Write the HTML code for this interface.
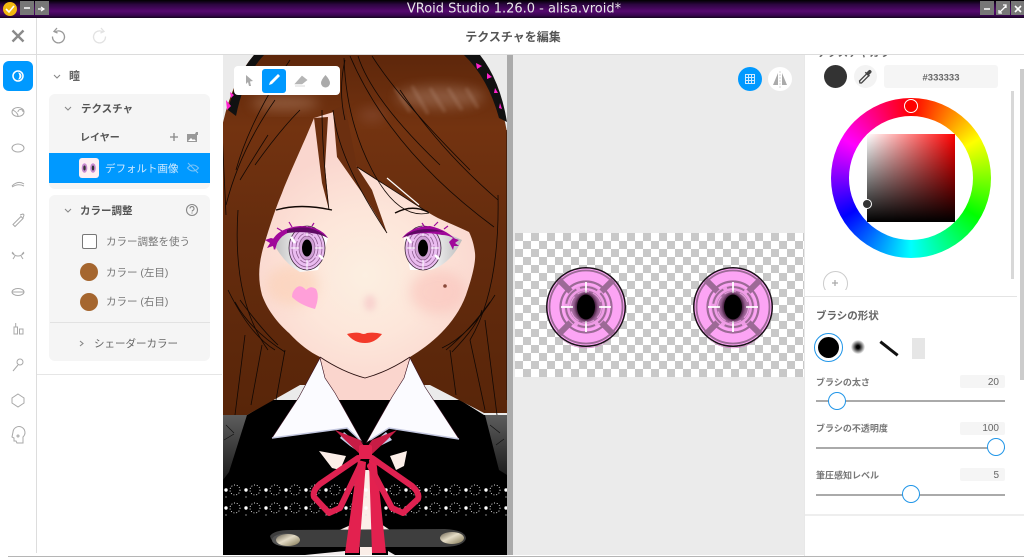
<!DOCTYPE html>
<html lang="ja"><head><meta charset="utf-8"><title>VRoid Studio</title>
<style>
*{box-sizing:border-box}
html,body{margin:0;padding:0;background:#fff}
#r{position:relative;width:1024px;height:558px;overflow:hidden;background:#fff;font-family:"Liberation Sans","Noto Sans CJK JP",sans-serif;color:#666;filter:blur(.3px)}
.a{position:absolute}
.t{position:absolute;white-space:nowrap;transform:translateY(calc(-50% + 1px));line-height:1;font-size:10px}
.b{font-weight:700}
svg{position:absolute;left:0;top:0;overflow:visible}
.wb{position:absolute;top:1px;width:14px;height:14px;background:#777}
</style></head><body><div id="r">
<div class="a" style="left:0;top:0;width:1024px;height:18px;background:linear-gradient(#000 0,#2c0640 25%,#55086f 62%,#3a0650 85%,#14021e 100%)"></div>
<div class="t" style="left:2px;width:1024px;text-align:center;top:8px;font-size:13px;font-family:'DejaVu Sans',sans-serif;color:#e8e8e8">VRoid Studio 1.26.0 - alisa.vroid*</div>
<div class="wb" style="left:20px"></div><div class="wb" style="left:35px"></div>
<div class="wb" style="left:980px"></div><div class="wb" style="left:996px"></div><div class="wb" style="left:1011px"></div>

<div class="a" style="left:223px;top:55px;width:284px;height:500px;background:#ebebeb"></div>
<div class="a" style="left:507px;top:55px;width:6px;height:500px;background:#aaa"></div>
<div class="a" style="left:513px;top:55px;width:291px;height:500px;background:#ebebeb"></div>

<svg width="1024" height="558" viewBox="0 0 1024 558">
<defs>
<pattern id="ck" width="16" height="16" patternUnits="userSpaceOnUse" x="515" y="233"><rect width="16" height="16" fill="#fff"/><rect width="8" height="8" fill="#c8c8c8"/><rect x="8" y="8" width="8" height="8" fill="#c8c8c8"/></pattern>
<pattern id="lace" width="20" height="18" patternUnits="userSpaceOnUse" x="222" y="482"><circle cx="4" cy="8" r="1.700" fill="#fff"/><circle cx="13" cy="8" r="5" fill="none" stroke="#eee" stroke-width=".9" stroke-dasharray="1 1.800"/><circle cx="4" cy="15" r=".6" fill="#ddd"/></pattern>
<linearGradient id="hg" x1="0" y1="55" x2="0" y2="415" gradientUnits="userSpaceOnUse"><stop offset="0" stop-color="#5e270b"/><stop offset=".2" stop-color="#733310"/><stop offset=".5" stop-color="#652c0e"/><stop offset="1" stop-color="#582509"/></linearGradient>
<radialGradient id="sk" cx="365" cy="275" r="125" gradientUnits="userSpaceOnUse"><stop offset="0" stop-color="#fcefe1"/><stop offset=".5" stop-color="#fde6da"/><stop offset="1" stop-color="#fad6ce"/></radialGradient>
<linearGradient id="slv" x1="0" y1="0" x2="0" y2="1"><stop offset="0" stop-color="#5c5c5c"/><stop offset="1" stop-color="#1c1c1c"/></linearGradient>
<linearGradient id="wl" x1="0" y1="0" x2="1" y2="0"><stop offset="0" stop-color="#bbb"/><stop offset=".6" stop-color="#fff"/></linearGradient>
<linearGradient id="wr" x1="1" y1="0" x2="0" y2="0"><stop offset="0" stop-color="#bbb"/><stop offset=".6" stop-color="#fff"/></linearGradient>
<linearGradient id="btn" x1="0" y1="0" x2="1" y2="1"><stop offset="0" stop-color="#6b6250"/><stop offset=".45" stop-color="#e4dcc6"/><stop offset="1" stop-color="#7f7550"/></linearGradient>
<filter id="bl6" x="-50%" y="-50%" width="200%" height="200%"><feGaussianBlur stdDeviation="6"/></filter>
<filter id="bl3" x="-50%" y="-50%" width="200%" height="200%"><feGaussianBlur stdDeviation="3"/></filter>
<filter id="bl1" x="-50%" y="-50%" width="200%" height="200%"><feGaussianBlur stdDeviation="1.500"/></filter>
<clipPath id="vp"><rect x="223" y="55" width="284" height="500"/></clipPath>
<clipPath id="hairc"><path d="M254 55H466Q500 85 507 133V415H222V127Q232 80 254 55Z"/></clipPath>
<clipPath id="fc"><path d="M314 118C303 145 290 172 282 193C274 212 268 232 264 245C258 265 258 280 262 295C268 312 280 325 289 333C300 345 310 352 320 357C335 367 350 374 365 378C380 374 395 367 410 357C430 345 455 325 466 295C472 278 476 262 475 253C474 245 472 238 469 232C455 225 440 220 429 213C410 200 385 185 357 167L340 110Z"/></clipPath>
<g id="eyet">
<circle r="40" fill="#1a1018"/>
<circle r="38.500" fill="#fca4f4"/>
<path d="M-27 30A38 38 0 0 0 27 30A40 40 0 0 1 -27 30Z" fill="#d77cc8"/>
<circle r="36.500" fill="none" stroke="#9c6a96" stroke-width="1.800"/>
<path d="M-27-27L-15-15M27-27L15-15M-27 27L-15 15M27 27L15 15" stroke="#9c6a96" stroke-width="6"/>
<circle r="25.500" fill="none" stroke="#9c6a96" stroke-width="2.200"/>
<circle r="22" fill="#ef9ce6"/>
<circle r="20" fill="none" stroke="#9c6a96" stroke-width="2" stroke-dasharray="18 4"/>
<circle r="16.500" fill="#a86ea2"/>
<circle r="15.500" fill="none" stroke="#e8a0e0" stroke-width="1.200" stroke-dasharray="12 4"/>
<path d="M0-25V-14M0 25V14M-25 0H-13M25 0H13" stroke="#fff" stroke-width="1.800"/>
<ellipse rx="11" ry="14" fill="#3a1436" filter="url(#bl1)"/>
<ellipse rx="9" ry="12.500" fill="#000"/>
</g>
<g id="iris">
<ellipse rx="18" ry="22" fill="#eabcf0" stroke="#3d2a3a" stroke-width=".8"/>
<ellipse rx="15" ry="19" fill="none" stroke="#8e5e90" stroke-width=".8"/>
<ellipse rx="11" ry="15" fill="none" stroke="#8e5e90" stroke-width=".8" stroke-dasharray="8 2"/>
<ellipse rx="8" ry="12" fill="#cf9fd4" stroke="#8e5e90" stroke-width=".8"/>
<path d="M0-22V-12M0 22V12M-16 0H-8M16 0H8" stroke="#fff" stroke-width="1"/>
<path d="M-16-11L-12-5M12 7L16 11" stroke="#fff" stroke-width="2.500"/>
<ellipse rx="5" ry="8.500" fill="#000"/>
</g>
</defs>

<!-- texture -->
<rect x="515" y="233" width="289" height="144" fill="url(#ck)"/>
<use href="#eyet" x="586" y="307"/>
<use href="#eyet" x="733" y="307"/>

<g clip-path="url(#vp)">
<!-- body -->
<path d="M222 415H247L272 400H460L484 415H507V555H222Z" fill="#000"/>
<path d="M223 415H247L229 472L223 480Z" fill="url(#slv)"/>
<path d="M485 415H507V475L499 470Z" fill="url(#slv)"/>
<path d="M226 425l8 8M224 440l10-6M490 425l10 8M496 445l8-6" stroke="#111" stroke-width=".7" fill="none"/>
<!-- hair -->
<path d="M254 55H466Q500 85 507 133V413H484L430 385H300L247 415H222V127Q232 80 254 55Z" fill="url(#hg)"/>
<!-- headband -->
<path d="M228 110Q236 76 254 55H264Q244 76 236 116Z" fill="#111"/>
<path d="M464 55H480Q500 80 507 122L499 118Q488 78 464 55Z" fill="#111"/>
<path d="M226 100l5 6-4 4zM230 92l4 3-3 3zM476 63l6 3-5 3zM487 73l5 4-5 2zM495 88l3 5-4 0zM500 103l2 6-3-1z" fill="#ff22cc"/>
<!-- highlights -->
<g clip-path="url(#hairc)">
<ellipse cx="440" cy="97" rx="44" ry="11" fill="#d9b9a8" opacity=".3" filter="url(#bl6)"/>
<g stroke="#d9b9a8" stroke-width="3" opacity=".22" filter="url(#bl1)"><path d="M395 88L410 112M412 86L428 114M430 88L445 112M448 88L462 110M466 88L478 108"/></g>
<ellipse cx="285" cy="103" rx="34" ry="7" fill="#d0a890" opacity=".36" filter="url(#bl6)"/>
<ellipse cx="372" cy="115" rx="14" ry="7" fill="#c99" opacity=".18" filter="url(#bl6)"/>
</g>
<!-- face -->
<g clip-path="url(#fc)">
<rect x="250" y="100" width="235" height="285" fill="url(#sk)"/>
<ellipse cx="292" cy="285" rx="26" ry="20" fill="#fbcfb4" opacity=".6" filter="url(#bl6)"/>
<ellipse cx="438" cy="292" rx="28" ry="22" fill="#f9bfb8" opacity=".55" filter="url(#bl6)"/>
<ellipse cx="370" cy="303" rx="6" ry="8" fill="#f6c4c6" opacity=".6" filter="url(#bl3)"/>
</g>
<path d="M320 357C335 367 350 374 365 378C380 374 395 367 410 357L404 378L392 400H335L325 378Z" fill="#fad5cd"/>
<path d="M320 357C335 367 350 374 365 378C380 374 395 367 410 357" fill="none" stroke="#2a1010" stroke-width=".9"/>
<!-- bangs -->
<path d="M314 118L328 117L325 167L329 210L322 183Z" fill="#6b2f10"/>
<path d="M333 110L337 157L365 197L387 233L372 190L357 167L345 105Z" fill="#6b2f10"/>
<path d="M387 178L419 205" stroke="#fff" stroke-width="1.200"/>
<g fill="none" stroke="#120804" stroke-width=".8">
<path d="M344 58Q346 120 372 170T429 213"/><path d="M350 56Q390 150 494 227"/>
<path d="M358 56Q372 100 440 165"/><path d="M372 56Q400 100 470 170"/><path d="M400 90Q440 150 498 200"/>
<path d="M322 110Q322 150 329 210"/><path d="M333 110Q338 160 387 233"/>
<path d="M275 100Q240 150 226 205"/><path d="M300 110Q280 130 255 165"/>
<path d="M290 60Q250 120 236 170"/><path d="M268 135Q252 160 240 180"/><path d="M345 60Q338 90 345 120"/>
<path d="M357 167L429 213"/><path d="M222 130L226 215"/>
<path d="M238 210Q232 300 268 350"/>
<path d="M498 195Q500 290 470 340"/><path d="M507 130V400"/>
<path d="M245 335L235 415M262 345L251 405M285 350L276 400M450 350L456 395M470 340L485 410M485 320L497 415"/>
<path d="M235 302Q250 330 285 352M240 300Q262 330 278 345M228 290Q250 335 275 350M446 350Q470 330 490 302M452 352Q478 325 482 310M442 348Q470 335 495 295"/>
<path d="M276 210Q300 203 332 210" stroke-width="1.400"/>
<path d="M395 213Q412 204 428 212" stroke-width="1.400"/>
</g>
<!-- eyes -->
<path d="M272 240Q300 222 328 238L318 270L300 272Q282 262 272 240Z" fill="url(#wl)"/>
<path d="M404 238Q430 224 462 240Q450 265 430 270L410 270Z" fill="url(#wr)"/>
<use href="#iris" x="307" y="248"/>
<use href="#iris" x="423" y="248"/>
<path d="M272 241Q278 228 300 226Q320 226 328 238Q312 228 296 231Q280 232 274 250Z" fill="#a0089a"/>
<path d="M287 230Q310 222 328 238Q312 230 287 233Z" fill="#5e0a62"/>
<path d="M271 238l-6 2 5 3-3 5 6-2 2 4 3-10z" fill="#a0089a"/>
<path d="M292 227l-3-5M282 231l-5-3M312 226l2-3" stroke="#a0089a" stroke-width="1.200"/>
<path d="M402 238Q412 226 430 226Q448 230 459 243Q452 235 442 235Q420 230 402 238Z" fill="#a0089a"/>
<path d="M403 237Q420 224 445 232Q425 230 403 237Z" fill="#5e0a62"/>
<path d="M453 238l6 2-4 3 4 3-5 0-1 4-4-8z" fill="#a0089a"/>
<path d="M434 226l4-4M444 229l4-3M424 226l-2-3" stroke="#a0089a" stroke-width="1.200"/>
<!-- facial -->
<path d="M295 289Q300 283 306 290Q311 285 316 289Q320 296 315 309Q300 305 292 297Q292 292 295 289Z" fill="#ff9fd9"/>
<circle cx="445" cy="286" r="1.800" fill="#8a4a3a"/>
<path d="M347 334Q355 332 360 333Q364 335 367 333Q375 332 382 334Q375 343 365 343Q354 343 347 334Z" fill="#f33a2a"/>
<!-- collar -->
<path d="M344 432L365 450L386 432L392 440L380 446L365 456L350 446L340 438Z" fill="#c4cde8"/>
<path d="M319 451L346 456L340 470L332 468Z" fill="#fbeee8"/>
<path d="M407 451L390 456L396 470L404 466Z" fill="#fbeee8"/>
<path d="M360 470H372V555H360Z" fill="#fbeee8"/>
<path d="M335 532L362 520H375L393 532Z" fill="#fbeee8"/>
<rect x="223" y="482" width="284" height="36" fill="url(#lace)"/>
<path d="M320 358L325 378L335 393L363 443L347 428L272 438L299 397Z" fill="#fbfbff" stroke="#3a1020" stroke-width=".6"/>
<path d="M410 358L404 378L392 397L366 443L389 428L459 439L425 387Z" fill="#fbfbff" stroke="#3a1020" stroke-width=".6"/>
<path d="M272 438L347 428L360 440" fill="none" stroke="#c4c8e0" stroke-width="1.400"/>
<path d="M459 439L389 428L370 440" fill="none" stroke="#c4c8e0" stroke-width="1.400"/>
<!-- belt -->
<path d="M270 536Q274 530 290 530L445 529Q465 530 466 538Q465 546 445 547H290Q272 546 270 536Z" fill="#3e3e3e"/>
<ellipse cx="286" cy="540" rx="14" ry="6.500" fill="#555"/>
<ellipse cx="288" cy="540" rx="12" ry="6" fill="url(#btn)"/>
<ellipse cx="452" cy="538" rx="12" ry="6" fill="url(#btn)"/>
<path d="M305 555L345 551V555ZM388 551L395 555H388Z" fill="#f4eeee"/>
<!-- ribbon -->
<path d="M335 430L360 440L368 452L362 456L345 440ZM397 430L372 440L364 452L370 456L387 440Z" fill="#c71c45"/>
<path d="M358 460L345 553H359L366 462Z" fill="#e3214f"/>
<path d="M369 460L372 553H386L376 458Z" fill="#e3214f"/>
<g fill="none" stroke="#df2150" stroke-width="6" stroke-linejoin="round" stroke-linecap="round">
<path d="M358 458L320 484Q312 491 314 497L329 513L340 508L360 466"/>
<path d="M372 458L412 486Q420 493 418 499L403 513L392 508L370 466"/>
</g>
<rect x="359" y="445" width="13" height="14" rx="2" fill="#e3214f"/>
</g>
</svg>

<!-- left rail & toolbar lines -->
<div class="a" style="left:0;top:18px;width:1024px;height:1px;background:#fff"></div>
<div class="a" style="left:0;top:54px;width:1024px;height:1px;background:#dcdcdc"></div>
<div class="a" style="left:36px;top:18px;width:1px;height:535px;background:#ddd"></div>
<div class="a" style="left:37px;top:374px;width:185px;height:1px;background:#e6e6e6"></div>
<div class="a" style="left:8px;top:556px;width:1016px;height:1px;background:#b5b5b5"></div>
<div class="a" style="left:3px;top:61px;width:30px;height:30px;border-radius:6px;background:#0099ff"></div>

<!-- left panel -->
<div class="t b" style="left:69px;top:76px;font-size:11px;color:#666">瞳</div>
<div class="a" style="left:49px;top:94px;width:161px;height:95px;border-radius:6px;background:#f5f5f5"></div>
<div class="t b" style="left:81px;top:108px;font-size:10.500px;color:#555">テクスチャ</div>
<div class="t b" style="left:80px;top:138px;font-size:10px;color:#555">レイヤー</div>
<div class="a" style="left:49px;top:153px;width:161px;height:30px;background:#0099ff"></div>
<div class="a" style="left:79px;top:158px;width:20px;height:20px;border-radius:3px;background:#fdeef2"></div>
<div class="t" style="left:105px;top:168px;font-size:10.500px;color:#cfe9ff">デフォルト画像</div>
<div class="a" style="left:49px;top:195px;width:161px;height:166px;border-radius:6px;background:#f5f5f5"></div>
<div class="t b" style="left:80px;top:210px;font-size:10.500px;color:#555">カラー調整</div>
<div class="a" style="left:82px;top:234px;width:15px;height:15px;border-radius:2px;border:1px solid #777;background:#fff"></div>
<div class="t" style="left:106px;top:241px;font-size:10.500px;color:#777">カラー調整を使う</div>
<div class="a" style="left:80px;top:263px;width:18px;height:18px;border-radius:50%;background:#a5662f"></div>
<div class="t" style="left:106px;top:272px;font-size:10.500px;color:#777">カラー (左目)</div>
<div class="a" style="left:80px;top:293px;width:18px;height:18px;border-radius:50%;background:#a5662f"></div>
<div class="t" style="left:106px;top:301px;font-size:10.500px;color:#777">カラー (右目)</div>
<div class="a" style="left:50px;top:322px;width:160px;height:1px;background:#e2e2e2"></div>
<div class="t" style="left:94px;top:343px;font-size:10.500px;color:#666">シェーダーカラー</div>

<!-- header -->
<div class="t b" style="left:1px;width:1024px;text-align:center;top:36px;font-size:12px;color:#555">テクスチャを編集</div>

<!-- viewport tool -->
<div class="a" style="left:234px;top:66px;width:106px;height:29px;border-radius:4px;background:#fff"></div>
<div class="a" style="left:262px;top:69px;width:24px;height:24px;border-radius:3px;background:#0099ff"></div>
<div class="a" style="left:738px;top:67px;width:24px;height:24px;border-radius:50%;background:#0099ff"></div>
<div class="a" style="left:768px;top:67px;width:24px;height:24px;border-radius:50%;background:#fff"></div>

<!-- right panel -->
<div class="a" style="left:804px;top:55px;width:220px;height:501px;background:#fff;overflow:hidden">
  <div class="t b" style="left:13px;top:-3px;font-size:10.500px;color:#666">テクスチャカラー</div>
</div>
<div class="a" style="left:824px;top:65px;width:23px;height:23px;border-radius:50%;background:#333"></div>
<div class="a" style="left:854px;top:65px;width:23px;height:23px;border-radius:50%;background:#f3f3f3"></div>
<div class="a" style="left:884px;top:65px;width:114px;height:23px;border-radius:3px;background:#f5f5f5"></div>
<div class="t b" style="left:884px;width:114px;text-align:center;top:77px;font-size:9.500px;color:#666">#333333</div>
<div class="a" style="left:831px;top:98px;width:160px;height:160px;border-radius:50%;background:conic-gradient(#f00,#ff0,#0f0,#0ff,#00f,#f0f,#f00)"></div>
<div class="a" style="left:849px;top:116px;width:124px;height:124px;border-radius:50%;background:#fff"></div>
<div class="a" style="left:867px;top:134px;width:88px;height:88px;background:linear-gradient(to top,#000,rgba(0,0,0,0)),linear-gradient(to right,#fff,#f00)"></div>
<div class="a" style="left:904px;top:99px;width:14px;height:14px;border-radius:50%;border:1.500px solid #fff;background:#f00"></div>
<div class="a" style="left:862px;top:199px;width:10px;height:10px;border-radius:50%;border:1px solid #fff;background:#333"></div>
<div class="a" style="left:823px;top:271px;width:25px;height:19px;overflow:hidden"><div class="a" style="left:0;top:0;width:25px;height:25px;border-radius:50%;border:1px solid #ccc"></div></div>
<div class="a" style="left:804px;top:296px;width:213px;height:1px;background:#e4e4e4"></div>
<div class="a" style="left:1011px;top:91px;width:3px;height:188px;background:#d8d8d8"></div>
<div class="a" style="left:1020px;top:69px;width:4px;height:311px;background:#ccc"></div>
<div class="t b" style="left:816px;top:315px;font-size:10.500px;color:#666">ブラシの形状</div>
<div class="a" style="left:814px;top:333px;width:29px;height:29px;border-radius:50%;border:1.500px solid #2196e8"></div>
<div class="a" style="left:818px;top:337px;width:21px;height:21px;border-radius:50%;background:#000"></div>
<div class="a" style="left:851px;top:340px;width:14px;height:14px;border-radius:50%;background:radial-gradient(#000 15%,rgba(0,0,0,0) 72%)"></div>
<div class="a" style="left:878px;top:347px;width:22px;height:3px;background:#111;transform:rotate(38deg)"></div>
<div class="a" style="left:912px;top:338px;width:13px;height:21px;background:#e6e6e6"></div>

<div class="t b" style="left:816px;top:382px;font-size:9px;color:#777">ブラシの太さ</div>
<div class="a" style="left:960px;top:375px;width:45px;height:13px;border-radius:2px;background:#f5f5f5"></div>
<div class="t" style="right:25px;top:382px;font-size:10px;color:#666">20</div>
<div class="a" style="left:816px;top:400px;width:189px;height:2px;background:#aaa"></div>
<div class="a" style="left:828px;top:392px;width:18px;height:18px;border-radius:50%;border:1.500px solid #2196e8;background:#fff"></div>

<div class="t b" style="left:816px;top:428px;font-size:9px;color:#777">ブラシの不透明度</div>
<div class="a" style="left:960px;top:422px;width:45px;height:13px;border-radius:2px;background:#f5f5f5"></div>
<div class="t" style="right:25px;top:428px;font-size:10px;color:#666">100</div>
<div class="a" style="left:816px;top:447px;width:189px;height:2px;background:#aaa"></div>
<div class="a" style="left:987px;top:438px;width:18px;height:18px;border-radius:50%;border:1.500px solid #2196e8;background:#fff"></div>

<div class="t b" style="left:816px;top:475px;font-size:9px;color:#777">筆圧感知レベル</div>
<div class="a" style="left:960px;top:468px;width:45px;height:13px;border-radius:2px;background:#f5f5f5"></div>
<div class="t" style="right:25px;top:475px;font-size:10px;color:#666">5</div>
<div class="a" style="left:816px;top:494px;width:189px;height:2px;background:#aaa"></div>
<div class="a" style="left:902px;top:485px;width:18px;height:18px;border-radius:50%;border:1.500px solid #2196e8;background:#fff"></div>
<div class="a" style="left:804px;top:514px;width:220px;height:2px;background:#eee"></div>
<div class="a" style="left:804px;top:55px;width:1px;height:501px;background:#e8e8e8"></div>

<!-- icons overlay -->
<svg width="1024" height="558" viewBox="0 0 1024 558">
<circle cx="10" cy="9" r="7" fill="#f2b90f"/><path d="M6 9l3 3 5-6" stroke="#fff" stroke-width="1.600" fill="none"/>
<path d="M24 8h6" stroke="#fff" stroke-width="1.500"/><path d="M38 9h6M41 7l3 2-3 2" stroke="#fff" stroke-width="1.200" fill="none"/>
<path d="M984 9h6" stroke="#fff" stroke-width="1.500"/><path d="M1000 12l6-6M1003 5h3v3M1002 13H999V10" stroke="#fff" stroke-width="1.300" fill="none"/><path d="M1015 6l6 6M1021 6l-6 6" stroke="#fff" stroke-width="1.600"/>
<!-- header icons -->
<path d="M12.500 30.500l11 11M23.500 30.500l-11 11" stroke="#8a8a8a" stroke-width="2.400"/>
<g fill="none" stroke="#999" stroke-width="1.300"><path d="M55 32a6 6 0 1 1-2.500 4.500"/><path d="M57 28l-3 3.500 3.500 1.500"/></g>
<g fill="none" stroke="#e2e2e2" stroke-width="1.300"><path d="M103 32a6 6 0 1 0 2.500 4.500"/><path d="M101 28l3 3.500-3.500 1.500"/></g>
<!-- rail -->
<circle cx="18" cy="76" r="5" fill="none" stroke="#fff" stroke-width="1.500"/><path d="M18 72.500a3.500 3.500 0 0 1 0 7a5 5 0 0 0 0-7Z" fill="#fff"/>
<g fill="none" stroke="#a8a8a8" stroke-width="1">
<ellipse cx="18" cy="112" rx="6" ry="4.500"/><path d="M13 110Q18 113 18 116M18 112a2.500 2.500 0 0 1 5 0"/>
<ellipse cx="18" cy="148" rx="6" ry="4"/>
<path d="M12 186Q18 180 24 184M12 187Q18 183 24 186"/>
<path d="M13 224.500l8-8 2 2-8 8ZM20 215l3-1 1 1-1 3"/>
<path d="M12 253Q18 259 24 253M12 252l2 2M24 252l-2 2M13 259l2-3M23 259l-2-3"/>
<ellipse cx="18" cy="292" rx="6" ry="3.500"/><path d="M12 292H24"/>
<rect x="14" y="327" width="3.500" height="7"/><rect x="19.500" y="329" width="3.500" height="5"/><path d="M15.700 327V323"/>
<circle cx="20" cy="362" r="3"/><path d="M18 365L13 371"/>
<path d="M18 394L24 398V403L18 407L12 403V398Z"/>
<path d="M13 432a6 6 0 1 1 10 5V443H17l-1-2H14V438L12 437Z"/><circle cx="18" cy="436" r="1"/>
</g>
<!-- panel chevrons -->
<g fill="none" stroke="#888" stroke-width="1.100">
<path d="M54 75l3 3 3-3M65 107l3 3 3-3M65 209l3 3 3-3M80 341l3 2.500-3 2.500"/>
<path d="M174 133v8M170 137h8" stroke-width="1.300"/>
<circle cx="192" cy="210" r="5.500"/><path d="M190 208.500a2 2 0 1 1 2.500 2l-.5 1"/>
</g>
<circle cx="192" cy="213" r=".6" fill="#888"/>
<path d="M187 134h8l1-2h2v3h-1v7H187Z" fill="#999"/><path d="M188 141l3-3 2 2 1-1 2 2" fill="#fff"/>
<g><ellipse cx="84.500" cy="168" rx="2.800" ry="4.800" fill="#c78ad0"/><ellipse cx="93" cy="168" rx="2.800" ry="4.800" fill="#c78ad0"/><ellipse cx="84.500" cy="168" rx="1.200" ry="2.500" fill="#333"/><ellipse cx="93" cy="168" rx="1.200" ry="2.500" fill="#333"/></g>
<g fill="none" stroke="#7cc4f7" stroke-width="1"><path d="M187.500 168Q193 162 198.500 168Q193 174 187.500 168Z"/><path d="M188 163l10 10"/></g>
<!-- viewport tool icons -->
<path d="M246 75L253 81L250 81.500L251 86L249 86L248 82L246 84Z" fill="#aaa"/>
<path d="M269 85l1-3 8-8 2 2-8 8Z" fill="#fff"/>
<path d="M295 84l7-8 5 4-5 4h-4ZM295 86H305" fill="#b5b5b5" stroke="#b5b5b5" stroke-width=".6"/>
<path d="M325.500 75Q330 80 330 83A4.500 4.500 0 0 1 321 83Q321 80 325.500 75Z" fill="#aaa"/>
<g fill="none" stroke="#cfe9ff" stroke-width="1"><rect x="745.500" y="74.500" width="9" height="9"/><path d="M745.500 77.500h9M745.500 80.500h9M748.500 74.500v9M751.500 74.500v9"/></g>
<path d="M778 73L773 85H778ZM782 73L787 85H782Z" fill="#aaa"/><path d="M780 71V88" stroke="#ccc" stroke-width=".8" stroke-dasharray="2 1"/>
<g fill="none" stroke="#444" stroke-width="1.300"><path d="M860 83l-.5-2 7.500-7.500 2 2L861.500 83Z"/></g><path d="M866.500 72.500l2-2a1.700 1.700 0 0 1 2.500 2.500l-2 2 .8.800-1 1-4-4 1-1Z" fill="#444"/>
<path d="M835 280v6M832 283h6" stroke="#aaa" stroke-width="1.300"/>
</svg>
</div></body></html>
